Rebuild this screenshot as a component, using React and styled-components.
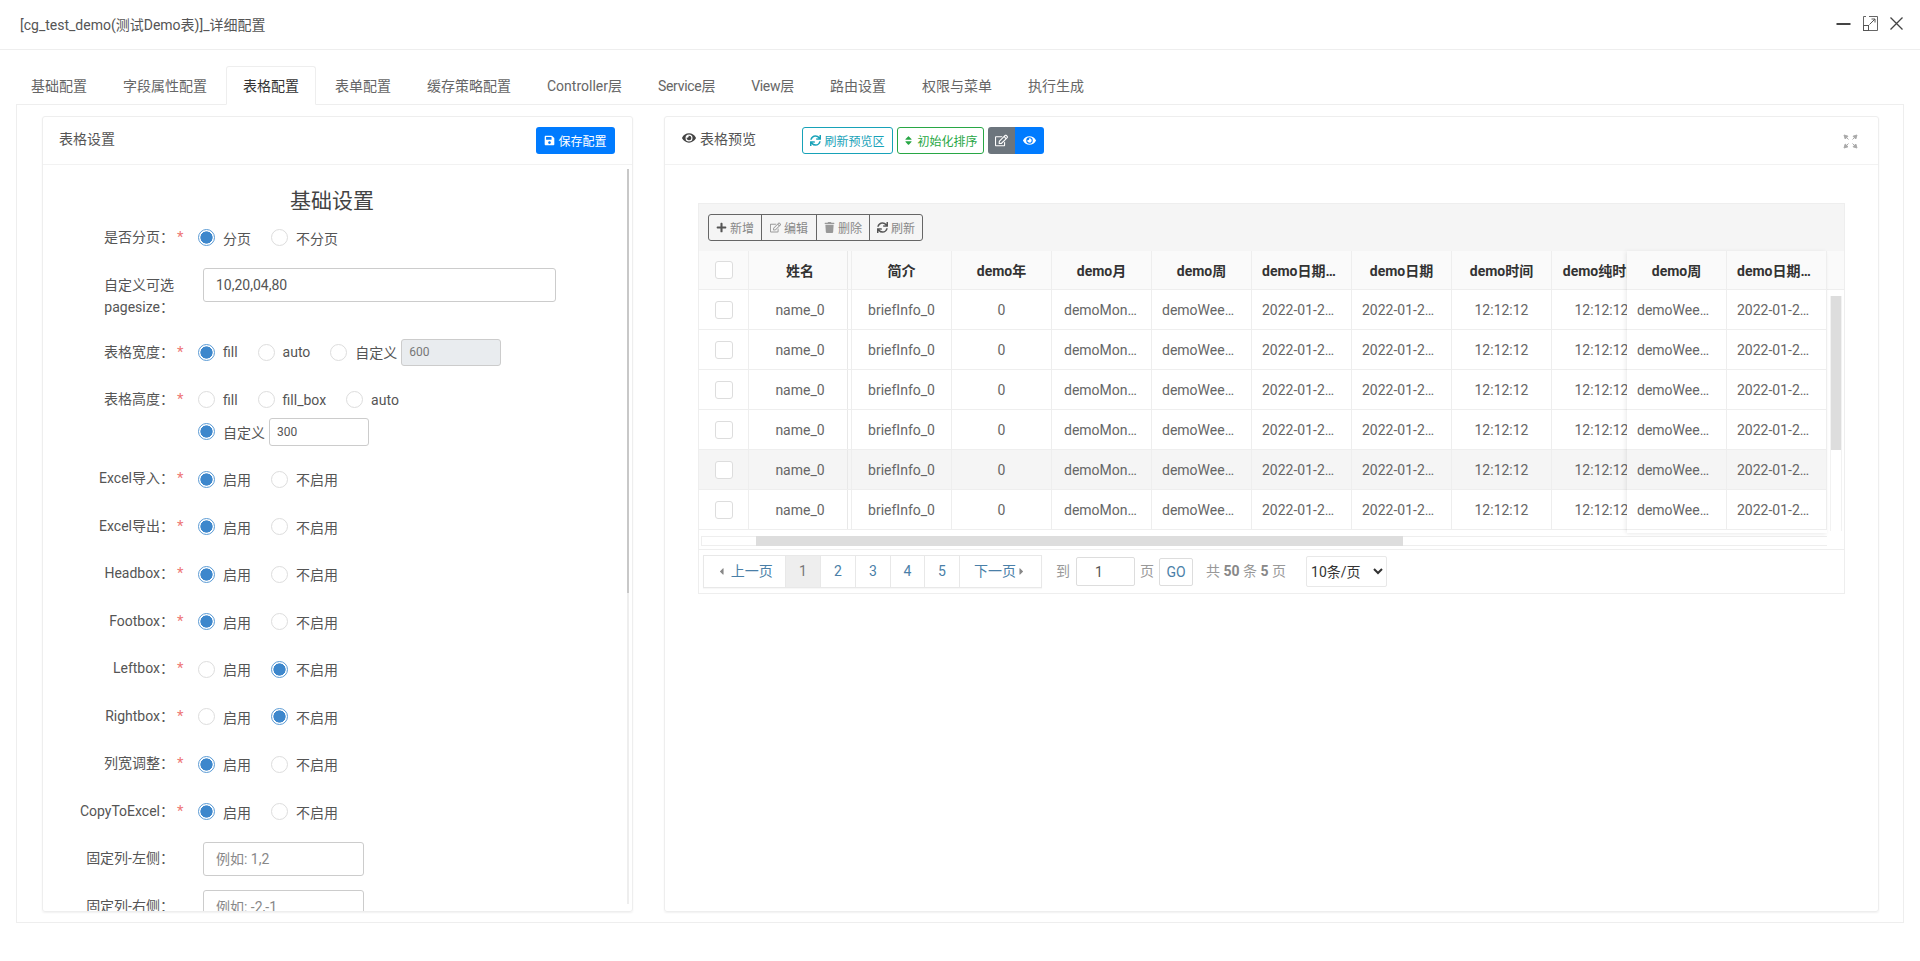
import React from "react";
import styled, { createGlobalStyle } from "styled-components";
import {
  FaSave,
  FaEye,
  FaSync,
  FaSort,
  FaRegEdit,
  FaPlus,
  FaTrash,
  FaCaretLeft,
  FaCaretRight,
} from "react-icons/fa";

const GlobalStyle = createGlobalStyle`
  * { box-sizing: border-box; }
  html, body { margin: 0; padding: 0; background: #fff; }
  body {
    font-family: Roboto, "Noto Sans CJK SC", sans-serif;
    font-size: 14px;
    color: #555;
  }
  input, select, button { font-family: inherit; }
`;

const Page = styled.div`
  width: 1920px;
  height: 961px;
  overflow: hidden;
  background: #fff;
`;

const TitleBar = styled.div`
  height: 50px;
  border-bottom: 1px solid #eee;
  display: flex;
  align-items: center;
  justify-content: space-between;
  padding: 0 17px 2px 20px;
  font-size: 14px;
  color: #555;
`;

const WindowButtons = styled.div`
  display: flex;
  align-items: center;
  gap: 12px;
`;

const TabBar = styled.div`
  display: flex;
  margin-top: 16px;
  padding-left: 14px;
  height: 38px;
  position: relative;
`;

const Tab = styled.div`
  height: ${({ $active }) => ($active ? "39px" : "38px")};
  line-height: 38px;
  padding: 0 16px;
  margin-right: 2px;
  border: 1px solid ${({ $active }) => ($active ? "#eee" : "transparent")};
  border-bottom: ${({ $active }) => ($active ? "1px solid #fff" : "0")};
  border-radius: 3px 3px 0 0;
  background: ${({ $active }) => ($active ? "#fff" : "transparent")};
  color: ${({ $active }) => ($active ? "#333" : "#666")};
  letter-spacing: ${({ $condensed }) => ($condensed ? "-0.3px" : "0")};
  position: relative;
  z-index: 1;
`;

const Panel = styled.div`
  margin-left: 16px;
  width: 1888px;
  height: 819px;
  border: 1px solid #eee;
  padding: 11px 24px 10px 25px;
  display: flex;
  gap: 31px;
`;

const Card = styled.div`
  width: ${({ $width }) => $width};
  height: 796px;
  border: 1px solid #eee;
  border-radius: 3px;
  box-shadow: 0 1px 2px rgba(0, 0, 0, 0.06);
  display: flex;
  flex-direction: column;
`;

const CardHead = styled.div`
  height: 48px;
  flex: none;
  border-bottom: 1px solid #f2f2f2;
  display: flex;
  align-items: center;
  justify-content: ${({ $spread }) => ($spread ? "space-between" : "flex-start")};
  padding: 0 17px 0 ${({ $spread }) => ($spread ? "16px" : "17px")};
`;

const CardTitle = styled.div`
  display: flex;
  align-items: center;
  gap: 4px;
  padding-bottom: 6px;
  color: #555;
  svg {
    font-size: 14px;
    color: #444;
  }
`;

const SaveButton = styled.button`
  height: 27px;
  width: 79px;
  border: 0;
  border-radius: 3px;
  background: #007bff;
  color: #fff;
  font-size: 12px;
  display: flex;
  align-items: center;
  justify-content: center;
  gap: 3px;
  padding: 0;
`;

const FormBody = styled.div`
  flex: 1;
  min-height: 0;
  display: flex;
`;

const Form = styled.div`
  flex: 1;
  min-width: 0;
  overflow: hidden;
  padding-top: 22px;
`;

const ScrollRail = styled.div`
  width: 2px;
  flex: none;
  margin: 4px 3px 7px 6px;
  background: #eee;
`;

const ScrollRailThumb = styled.div`
  height: 424px;
  background: #c8c8c8;
`;

const FormTitle = styled.h3`
  margin: 0;
  height: 27px;
  line-height: 29px;
  text-align: center;
  font-size: 21px;
  font-weight: 400;
  color: #444;
`;

const Row = styled.div`
  display: flex;
  margin-bottom: ${({ $extra }) => $extra || 0};
`;

const Label = styled.div`
  width: 131px;
  flex: none;
  text-align: right;
  line-height: ${({ $wrap }) => ($wrap ? "22px" : "47.5px")};
  padding-top: ${({ $wrap }) => ($wrap ? "12px" : "0")};
  padding-left: ${({ $wrap }) => ($wrap ? "44px" : "0")};
  white-space: ${({ $wrap }) => ($wrap ? "normal" : "nowrap")};
  color: #555;
`;

const Star = styled.div`
  width: 24px;
  flex: none;
  line-height: 47.5px;
  padding-left: 3px;
  font-size: 15px;
  color: #e77;
`;

const Options = styled.div`
  display: flex;
  flex-direction: column;
  padding: 7.75px 0 7.5px;
`;

const OptionLine = styled.div`
  display: flex;
  align-items: center;
  height: ${({ $height }) => $height || "47.5px"};
`;

const Option = styled.label`
  display: flex;
  align-items: center;
  gap: 8px;
  margin-right: ${({ $tight }) => ($tight ? "0" : "20px")};
`;

const Radio = styled.input.attrs({ type: "radio", readOnly: true })`
  appearance: none;
  margin: 0;
  width: 17px;
  height: 17px;
  border-radius: 50%;
  border: 1px solid #ddd;
  background: #fff;
  &:checked {
    border-color: #5b9bd5;
    background: radial-gradient(circle, #3d87cc 0 5.8px, #fff 6.4px);
  }
`;

const TextInput = styled.input`
  width: ${({ $width }) => $width};
  height: ${({ $height }) => $height};
  margin-left: ${({ $left }) => $left || "5px"};
  border: 1px solid #ccc;
  border-radius: 3px;
  padding: 0 ${({ $pad }) => $pad || "12px"};
  font-size: ${({ $font }) => $font || "14px"};
  color: #555;
  background: #fff;
  &:disabled {
    background: #e9ecef;
    color: #777;
  }
  &::placeholder {
    color: #888;
  }
`;

const PreviewActions = styled.div`
  display: flex;
  gap: 4px;
  margin-left: 46px;
`;

const OutlineButton = styled.button`
  height: 27px;
  width: ${({ $width }) => $width};
  padding: 0;
  border: 1px solid ${({ $color }) => $color};
  border-radius: 3px;
  background: #fff;
  color: ${({ $color }) => $color};
  font-size: 12px;
  display: flex;
  align-items: center;
  justify-content: center;
  gap: 3px;
  svg {
    font-size: 11px;
  }
`;

const ButtonGroup = styled.div`
  display: flex;
`;

const ToggleButton = styled.button`
  height: 27px;
  width: ${({ $width }) => $width};
  border: 0;
  padding: 0;
  background: ${({ $color }) => $color};
  color: #fff;
  border-radius: ${({ $radius }) => $radius};
  font-size: 13px;
  display: flex;
  align-items: center;
  justify-content: center;
`;

const FullscreenIcon = styled.svg`
  margin: 2px 3px 0 auto;
  width: 15px;
  height: 15px;
`;

const PreviewBody = styled.div`
  padding: 38px 33px 0;
`;

const TableBlock = styled.div`
  border: 1px solid #eee;
  height: 391px;
`;

const Toolbar = styled.div`
  height: 47px;
  background: #f5f5f5;
  padding: 10px 9px 0;
`;

const ToolGroup = styled.div`
  display: inline-flex;
  height: 27px;
  border: 1px solid #666;
  border-radius: 3px;
`;

const ToolButton = styled.button`
  width: ${({ $width }) => $width};
  height: 25px;
  border: 0;
  border-left: ${({ $first }) => ($first ? "0" : "1px solid #666")};
  background: transparent;
  padding: 0;
  color: #888;
  font-size: 12px;
  display: flex;
  align-items: center;
  justify-content: center;
  gap: 3px;
  svg {
    font-size: 11px;
    color: ${({ $dark }) => ($dark ? "#555" : "#999")};
  }
`;

const ScrollRow = styled.div`
  display: flex;
  height: 285px;
  position: relative;
`;

const Viewport = styled.div`
  width: 1128px;
  overflow: hidden;
`;

const GridTable = styled.table`
  border-collapse: separate;
  border-spacing: 0;
  table-layout: fixed;
  width: ${({ $width }) => $width};
  font-size: 14px;
`;

const HeadCell = styled.th`
  height: 39px;
  width: ${({ $width }) => $width || "100px"};
  background: #fafafa;
  border-right: 1px solid #eee;
  border-bottom: 1px solid #eee;
  padding: 0 ${({ $clip }) => ($clip ? "0" : "10px")};
  color: #333;
  font-weight: 700;
  text-align: center;
  white-space: nowrap;
  overflow: hidden;
  text-overflow: ${({ $clip }) => ($clip ? "clip" : "ellipsis")};
  box-shadow: ${({ $fixed }) => ($fixed ? "inset -3px 0 0 #fafafa, inset -4px 0 0 #e8e8e8" : "none")};
`;

const BodyCell = styled.td`
  height: 40px;
  background: ${({ $hover }) => ($hover ? "#f5f5f5" : "#fff")};
  border-right: 1px solid #eee;
  border-bottom: 1px solid #eee;
  padding: 0 ${({ $pad }) => $pad || "10px"};
  color: #666;
  text-align: center;
  white-space: nowrap;
  overflow: hidden;
  text-overflow: ellipsis;
  box-shadow: ${({ $fixed, $hover }) =>
    $fixed ? `inset -3px 0 0 ${$hover ? "#f5f5f5" : "#fff"}, inset -4px 0 0 #e8e8e8` : "none"};
`;

const CheckBox = styled.input.attrs({ type: "checkbox", readOnly: true })`
  appearance: none;
  display: block;
  margin: 0 auto;
  width: 18px;
  height: 18px;
  background: #fff;
  border: 1px solid #ddd;
  border-radius: 3px;
`;

const FixedRight = styled.div`
  position: absolute;
  top: 0;
  right: 17px;
  width: 200px;
  height: 282px;
  overflow: hidden;
  background: #fff;
  box-shadow: -2px 0 4px rgba(0, 0, 0, 0.06), 0 2px 3px rgba(0, 0, 0, 0.03);
`;

const ScrollColumn = styled.div`
  width: 17px;
  flex: none;
`;

const HeadFill = styled.div`
  height: 39px;
  background: #fafafa;
  border-bottom: 1px solid #eee;
`;

const VerticalTrack = styled.div`
  width: 12px;
  height: 235px;
  margin: 6px 0 0 3px;
  border-left: 1px solid #f2f2f2;
  border-right: 1px solid #f2f2f2;
`;

const VerticalThumb = styled.div`
  height: 154px;
  background: #ddd;
`;

const HorizontalTrack = styled.div`
  height: 10px;
  width: 1126px;
  margin-left: 2px;
  border: 1px solid #eee;
  border-width: 1px 0 1px 1px;
  display: flex;
`;

const HorizontalThumb = styled.div`
  margin-left: 54px;
  width: 647px;
  margin-top: -1px;
  height: 10px;
  background: #ddd;
`;

const Footer = styled.div`
  margin-top: 3px;
  height: 44px;
  border-top: 1px solid #eee;
  padding: 5px 0 0 4px;
  display: flex;
  align-items: flex-start;
`;

const Pager = styled.div`
  display: flex;
  height: 33px;
  border: 1px solid #e8e8e8;
  box-shadow: 0 1px 1px rgba(0, 0, 0, 0.03);
`;

const PageCell = styled.div`
  width: ${({ $width }) => $width};
  line-height: 31px;
  text-align: center;
  border-left: ${({ $first }) => ($first ? "0" : "1px solid #e8e8e8")};
  background: ${({ $active }) => ($active ? "#eee" : "#fff")};
  color: ${({ $active }) => ($active ? "#777" : "#4a7fa8")};
  svg {
    font-size: 11px;
    color: #888;
    vertical-align: -1px;
  }
`;

const FooterText = styled.span`
  color: #999;
  line-height: 33px;
  margin-left: ${({ $left }) => $left};
  b {
    color: #888;
  }
`;

const JumpInput = styled.input`
  width: 59px;
  height: 29px;
  margin: 2px 0 0 6px;
  border: 1px solid #ddd;
  border-radius: 2px;
  padding: 0 0 0 18px;
  font-size: 14px;
  color: #555;
`;

const GoButton = styled.button`
  width: 34px;
  height: 28px;
  margin: 3px 0 0 5px;
  padding: 0;
  border: 1px solid #ddd;
  border-radius: 2px;
  background: #fff;
  color: #4a7fa8;
  font-size: 14px;
`;

const PageSize = styled.select`
  width: 81px;
  height: 31px;
  margin: 1px 0 0 20px;
  border: 1px solid #e8e8e8;
  border-radius: 2px;
  background-color: #fff;
  color: #333;
  font-size: 14px;
  padding: 0;
`;

const tabs = ["基础配置", "字段属性配置", "表格配置", "表单配置", "缓存策略配置", "Controller层", "Service层", "View层", "路由设置", "权限与菜单", "执行生成"];

const switches = [
  ["Excel导入", 0],
  ["Excel导出", 0],
  ["Headbox", 0],
  ["Footbox", 0],
  ["Leftbox", 1],
  ["Rightbox", 1],
  ["列宽调整", 0],
  ["CopyToExcel", 0],
];

const scrollColumns = [
  { title: "简介", value: "briefInfo_0" },
  { title: "demo年", value: "0" },
  { title: "demo月", value: "demoMonth_0", pad: "12px" },
  { title: "demo周", value: "demoWeek_0" },
  { title: "demo日期时间", value: "2022-01-22 12:12:12" },
  { title: "demo日期", value: "2022-01-22 12:12:12" },
  { title: "demo时间", value: "12:12:12" },
  { title: "demo纯时间", value: "12:12:12" },
];

const rows = [0, 1, 2, 3, 4, 5];

function WindowIcons() {
  return (
    <WindowButtons>
      <svg width="15" height="14" viewBox="0 0 15 14">
        <rect x="0.5" y="6" width="14" height="2" fill="#444" />
      </svg>
      <svg width="15" height="15" viewBox="0 0 15 15" fill="none" stroke="#555" strokeWidth="1">
        <path d="M6 .5h8.5V14.5H5.5M.5 9V.5H3" strokeOpacity="0.9" />
        <rect x="0.5" y="9.5" width="5" height="5" />
        <path d="M6.5 8.5L12 3M8.5 3H12V6.5" />
      </svg>
      <svg width="13" height="13" viewBox="0 0 13 13" stroke="#444" strokeWidth="1.3">
        <path d="M.5 .5l12 12M12.5 .5l-12 12" />
      </svg>
    </WindowButtons>
  );
}

function ChoiceRow({ name, label, picked }) {
  return (
    <Row>
      <Label>{label}：</Label>
      <Star>*</Star>
      <OptionLine>
        <Option>
          <Radio name={name} checked={picked === 0} />
          启用
        </Option>
        <Option>
          <Radio name={name} checked={picked === 1} />
          不启用
        </Option>
      </OptionLine>
    </Row>
  );
}

function SettingsCard() {
  return (
    <Card $width="591px">
      <CardHead $spread>
        <CardTitle>表格设置</CardTitle>
        <SaveButton>
          <FaSave size={11} />
          保存配置
        </SaveButton>
      </CardHead>
      <FormBody>
        <Form>
          <FormTitle>基础设置</FormTitle>
          <Row>
            <Label>是否分页：</Label>
            <Star>*</Star>
            <OptionLine>
              <Option>
                <Radio name="page" checked />
                分页
              </Option>
              <Option>
                <Radio name="page" checked={false} />
                不分页
              </Option>
            </OptionLine>
          </Row>
          <Row $extra="11px">
            <Label $wrap>自定义可选 pagesize：</Label>
            <Star />
            <OptionLine>
              <TextInput $width="353px" $height="34px" defaultValue="10,20,04,80" />
            </OptionLine>
          </Row>
          <Row>
            <Label>表格宽度：</Label>
            <Star>*</Star>
            <OptionLine>
              <Option>
                <Radio name="width" checked />
                fill
              </Option>
              <Option>
                <Radio name="width" checked={false} />
                auto
              </Option>
              <Option $tight>
                <Radio name="width" checked={false} />
                自定义
              </Option>
              <TextInput $width="100px" $height="27px" $font="12px" $pad="7px" $left="4px" disabled defaultValue="600" />
            </OptionLine>
          </Row>
          <Row>
            <Label>表格高度：</Label>
            <Star>*</Star>
            <Options>
              <OptionLine $height="32px">
                <Option>
                  <Radio name="height" checked={false} />
                  fill
                </Option>
                <Option>
                  <Radio name="height" checked={false} />
                  fill_box
                </Option>
                <Option>
                  <Radio name="height" checked={false} />
                  auto
                </Option>
              </OptionLine>
              <OptionLine $height="32px">
                <Option $tight>
                  <Radio name="height" checked />
                  自定义
                </Option>
                <TextInput $width="100px" $height="28px" $font="12px" $pad="7px" $left="4px" defaultValue="300" />
              </OptionLine>
            </Options>
          </Row>
          {switches.map(([label, picked]) => (
            <ChoiceRow key={label} name={label} label={label} picked={picked} />
          ))}
          <Row>
            <Label>固定列-左侧：</Label>
            <Star />
            <OptionLine>
              <TextInput $width="161px" $height="34px" placeholder="例如: 1,2" />
            </OptionLine>
          </Row>
          <Row>
            <Label>固定列-右侧：</Label>
            <Star />
            <OptionLine>
              <TextInput $width="161px" $height="34px" placeholder="例如: -2,-1" />
            </OptionLine>
          </Row>
        </Form>
        <ScrollRail>
          <ScrollRailThumb />
        </ScrollRail>
      </FormBody>
    </Card>
  );
}

function DemoTable() {
  return (
    <TableBlock>
      <Toolbar>
        <ToolGroup>
          <ToolButton $first $dark $width="52px">
            <FaPlus />
            新增
          </ToolButton>
          <ToolButton $width="55px">
            <FaRegEdit />
            编辑
          </ToolButton>
          <ToolButton $width="53px">
            <FaTrash />
            删除
          </ToolButton>
          <ToolButton $dark $width="53px">
            <FaSync />
            刷新
          </ToolButton>
        </ToolGroup>
      </Toolbar>
      <ScrollRow>
        <Viewport>
          <GridTable $width="953px">
            <thead>
              <tr>
                <HeadCell $width="50px">
                  <CheckBox />
                </HeadCell>
                <HeadCell $width="103px" $fixed>
                  姓名
                </HeadCell>
                {scrollColumns.map(({ title }, i) => (
                  <HeadCell key={title} $clip={i === 7}>
                    {title}
                  </HeadCell>
                ))}
              </tr>
            </thead>
            <tbody>
              {rows.map((r) => (
                <tr key={r}>
                  <BodyCell $hover={r === 4}>
                    <CheckBox />
                  </BodyCell>
                  <BodyCell $hover={r === 4} $fixed>
                    name_0
                  </BodyCell>
                  {scrollColumns.map(({ title, value, pad }) => (
                    <BodyCell key={title} $hover={r === 4} $pad={pad}>
                      {value}
                    </BodyCell>
                  ))}
                </tr>
              ))}
            </tbody>
          </GridTable>
        </Viewport>
        <FixedRight>
          <GridTable $width="200px">
            <thead>
              <tr>
                <HeadCell>demo周</HeadCell>
                <HeadCell>demo日期时间</HeadCell>
              </tr>
            </thead>
            <tbody>
              {rows.map((r) => (
                <tr key={r}>
                  <BodyCell $hover={r === 4}>demoWeek_0</BodyCell>
                  <BodyCell $hover={r === 4}>2022-01-22 12:12:12</BodyCell>
                </tr>
              ))}
            </tbody>
          </GridTable>
        </FixedRight>
        <ScrollColumn>
          <HeadFill />
          <VerticalTrack>
            <VerticalThumb />
          </VerticalTrack>
        </ScrollColumn>
      </ScrollRow>
      <HorizontalTrack>
        <HorizontalThumb />
      </HorizontalTrack>
      <Footer>
        <Pager>
          <PageCell $first $width="81px">
            <FaCaretLeft /> 上一页
          </PageCell>
          <PageCell $active $width="35px">1</PageCell>
          <PageCell $width="35px">2</PageCell>
          <PageCell $width="35px">3</PageCell>
          <PageCell $width="34px">4</PageCell>
          <PageCell $width="35px">5</PageCell>
          <PageCell $width="82px">
            下一页<FaCaretRight />
          </PageCell>
        </Pager>
        <FooterText $left="14px">到</FooterText>
        <JumpInput defaultValue="1" />
        <FooterText $left="5px">页</FooterText>
        <GoButton>GO</GoButton>
        <FooterText $left="13px">
          共 <b>50</b> 条 <b>5</b> 页
        </FooterText>
        <PageSize defaultValue="10">
          <option value="10">10条/页</option>
          <option value="20">20条/页</option>
        </PageSize>
      </Footer>
    </TableBlock>
  );
}

function PreviewCard() {
  return (
    <Card $width="1215px">
      <CardHead>
        <CardTitle>
          <FaEye />
          表格预览
        </CardTitle>
        <PreviewActions>
          <OutlineButton $color="#17a2b8" $width="91px">
            <FaSync />
            刷新预览区
          </OutlineButton>
          <OutlineButton $color="#28a745" $width="87px">
            <FaSort />
            初始化排序
          </OutlineButton>
          <ButtonGroup>
            <ToggleButton $color="#6c757d" $width="27px" $radius="3px 0 0 3px">
              <FaRegEdit />
            </ToggleButton>
            <ToggleButton $color="#007bff" $width="29px" $radius="0 3px 3px 0">
              <FaEye />
            </ToggleButton>
          </ButtonGroup>
        </PreviewActions>
        <FullscreenIcon viewBox="0 0 15 15" fill="#aaa" stroke="#aaa" strokeWidth="1">
          <path d="M1 1l4 1.2-2.8 2.8zM3 3l2.5 2.5M14 1l-1.2 4-2.8-2.8zM12 3L9.5 5.5M1 14l1.2-4 2.8 2.8zM3 12l2.5-2.5M14 14l-4-1.2 2.8-2.8zM12 12L9.5 9.5" />
        </FullscreenIcon>
      </CardHead>
      <PreviewBody>
        <DemoTable />
      </PreviewBody>
    </Card>
  );
}

export default function App() {
  return (
    <Page>
      <GlobalStyle />
      <TitleBar>
        <span>[cg_test_demo(测试Demo表)]_详细配置</span>
        <WindowIcons />
      </TitleBar>
      <TabBar>
        {tabs.map((t) => (
          <Tab key={t} $active={t === "表格配置"} $condensed={t === "Service层" || t === "View层"}>
            {t}
          </Tab>
        ))}
      </TabBar>
      <Panel>
        <SettingsCard />
        <PreviewCard />
      </Panel>
    </Page>
  );
}
